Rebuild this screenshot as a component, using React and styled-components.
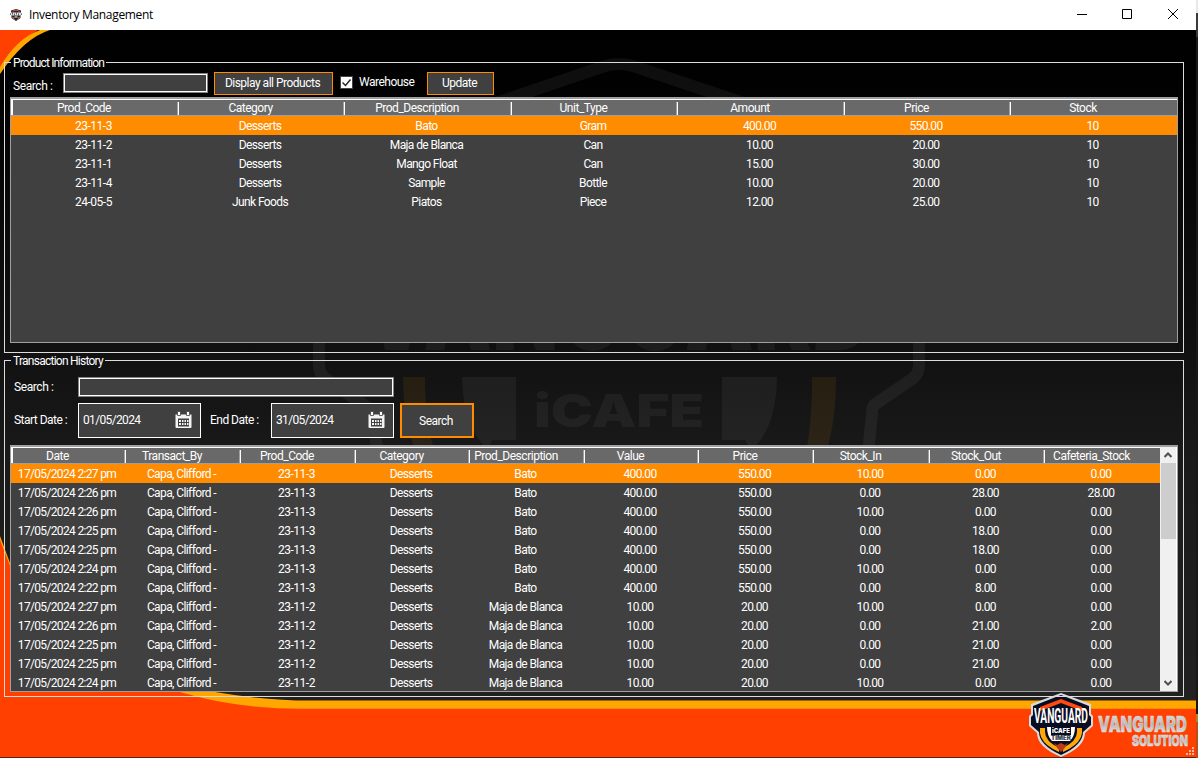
import React from "react";
import styled, { createGlobalStyle, css } from "styled-components";

const Global = createGlobalStyle`
  * { box-sizing: border-box; }
  body { margin: 0; background: #1b1b19; overflow: hidden; }
`;

const Desktop = styled.div`
  width: 1198px;
  height: 758px;
  padding-right: 2px;
  background: linear-gradient(#e8e8e8 0 13px, #3a3a3a 13px 37px, #181816 37px 714px, #a78a2a 714px 722px, #b3501c 722px);
  font-family: Roboto, "Liberation Sans", sans-serif;
  font-size: 12px;
  font-stretch: 90%;
  color: #fff;
`;

const Window = styled.div`
  width: 1196px;
  height: 758px;
  display: flex;
  flex-direction: column;
`;

const TitleBar = styled.header`
  height: 30px;
  flex: none;
  display: flex;
  align-items: center;
  padding-left: 10px;
  background: #fff;
  color: #000;
  font-family: "Open Sans", "Noto Sans", sans-serif;
  font-size: 12px;
  font-stretch: 100%;
  letter-spacing: -0.33px;
`;

const Title = styled.span`
  flex: 1;
  padding-left: 7px;
  line-height: 30px;
`;

const WindowButton = styled.span`
  width: ${(p) => p.$width || 46}px;
  height: 28px;
  align-self: flex-start;
  display: grid;
  place-items: center;
`;

const Client = styled.main`
  position: relative;
  flex: 1;
  padding: 25px 12px 0 4px;
  background: linear-gradient(#000 0, #020202 70px, #101010 310px, #1a1a1a 430px, #202120 670px);
  border-bottom: 1px solid #5c2410;
`;

const Backdrop = styled.svg`
  position: absolute;
  inset: 0;
  font-stretch: 100%;
`;

const Group = styled.section`
  position: relative;
  width: 1180px;
  height: ${(p) => p.$height}px;
`;

const Legend = styled.div`
  height: 16px;
  display: flex;
  align-items: center;
  line-height: 16px;
  letter-spacing: ${(p) => p.$spacing};
  white-space: nowrap;
  gap: 2px;
  &::before, &::after {
    content: "";
    height: 8px;
    align-self: flex-end;
    border-top: 1px solid #dcdcdc;
  }
  &::before { width: 6px; border-left: 1px solid #dcdcdc; }
  &::after { flex: 1; border-right: 1px solid #dcdcdc; }
`;

const GroupBody = styled.div`
  height: ${(p) => p.$height}px;
  padding: ${(p) => p.$top || 0}px 5px 0;
  border: 1px solid #dcdcdc;
  border-top: 0;
`;

const Toolbar = styled.div`
  display: flex;
  align-items: center;
  height: ${(p) => p.$height}px;
  margin-top: ${(p) => p.$top || 0}px;
`;

const Label = styled.label`
  width: ${(p) => p.$width}px;
  padding-left: ${(p) => p.$indent || 0}px;
  padding-top: ${(p) => p.$drop || 0}px;
  padding-bottom: ${(p) => p.$lift || 0}px;
  letter-spacing: ${(p) => p.$spacing || "-0.4px"};
  line-height: 16px;
  white-space: nowrap;
  flex: none;
`;

const TextBox = styled.div`
  width: ${(p) => p.$width}px;
  height: 20px;
  flex: none;
  background: #404040;
  border: 1px solid #828282;
  box-shadow: inset 0 0 0 1px #fff;
`;

const Button = styled.button`
  width: ${(p) => p.$width}px;
  height: ${(p) => p.$height}px;
  margin-left: ${(p) => p.$gap}px;
  padding: 0 2px 0 0;
  flex: none;
  background: #404040;
  border: ${(p) => p.$border || 1}px solid #ff8c00;
  color: #fff;
  font: inherit;
  letter-spacing: -0.5px;
`;

const Check = styled.span`
  width: 13px;
  height: 13px;
  margin: 0 6px 2px 7px;
  background: #fff;
  border: 1px solid #444;
  display: grid;
  place-items: center;
`;

const DateBox = styled.div`
  width: 123px;
  height: 35px;
  flex: none;
  display: flex;
  align-items: center;
  justify-content: space-between;
  padding: 0 8px 2px 4px;
  background: #404040;
  border: 1px solid #fff;
  letter-spacing: -0.65px;
  line-height: 16px;
`;

const Grid = styled.div`
  width: 1168px;
  height: ${(p) => p.$height}px;
  margin-top: ${(p) => p.$top}px;
  border: 1px solid #a0a0a0;
  border-top-width: 2px;
  background: #404040;
  display: flex;
`;

const Table = styled.div`
  flex: 1;
  min-width: 0;
`;

const columns = css`
  display: grid;
  grid-template-columns: ${(p) => p.$cols};
`;

const HeaderRow = styled.div`
  ${columns}
  height: 17px;
  background: #696969;
  border-bottom: 1px solid #a0a0a0;
  box-shadow: inset 0 1px #fff, inset 2px 0 #fff;
`;

const HeaderCell = styled.div`
  position: relative;
  text-align: center;
  padding-right: 21px;
  line-height: 18px;
  letter-spacing: -0.48px;
  white-space: nowrap;
  &:not(:last-child)::after {
    content: "";
    position: absolute;
    right: -1px;
    top: 3px;
    width: 2px;
    height: 13px;
    background: linear-gradient(90deg, #a0a0a0 50%, #fff 50%);
  }
`;

const Row = styled.div`
  ${columns}
  height: 19px;
  background: ${(p) => (p.$selected ? "#ff8c00" : "transparent")};
`;

const Cell = styled.div`
  padding-right: 2px;
  text-align: center;
  line-height: 21px;
  letter-spacing: ${(p) => p.$spacing};
  white-space: nowrap;
`;

const ScrollBar = styled.div`
  width: 17px;
  background: #f0f0f0;
  border-right: 1px solid #fff;
  display: flex;
  flex-direction: column;
  justify-content: space-between;
`;

const ScrollArrow = styled.span`
  height: 16px;
  display: grid;
  place-items: center;
`;

const ScrollThumb = styled.span`
  height: 76px;
  margin: 0 0 auto 1px;
  background: #cdcdcd;
`;

const cellSpacing = (v) =>
  v.includes("pm") ? "-0.66px" : v.startsWith("Capa") ? "-0.6px" : /^[\d.]+$/.test(v) ? "-0.65px" : /^[\d-]+$/.test(v) ? "-0.5px" : "-0.6px";

function DataTable({ cols, headers, rows }) {
  return (
    <Table>
      <HeaderRow $cols={cols}>
        {headers.map((h) => <HeaderCell key={h}>{h}</HeaderCell>)}
      </HeaderRow>
      {rows.map((r, i) => (
        <Row key={i} $cols={cols} $selected={i === 0}>
          {r.map((v, j) => <Cell key={j} $spacing={cellSpacing(v)}>{v}</Cell>)}
        </Row>
      ))}
    </Table>
  );
}

const products = [
  ["23-11-3", "Desserts", "Bato", "Gram", "400.00", "550.00", "10"],
  ["23-11-2", "Desserts", "Maja de Blanca", "Can", "10.00", "20.00", "10"],
  ["23-11-1", "Desserts", "Mango Float", "Can", "15.00", "30.00", "10"],
  ["23-11-4", "Desserts", "Sample", "Bottle", "10.00", "20.00", "10"],
  ["24-05-5", "Junk Foods", "Piatos", "Piece", "12.00", "25.00", "10"],
];

const bato = ["23-11-3", "Desserts", "Bato", "400.00", "550.00"];
const maja = ["23-11-2", "Desserts", "Maja de Blanca", "10.00", "20.00"];
const transactions = [
  ["2:27", bato, "10.00", "0.00", "0.00"],
  ["2:26", bato, "0.00", "28.00", "28.00"],
  ["2:26", bato, "10.00", "0.00", "0.00"],
  ["2:25", bato, "0.00", "18.00", "0.00"],
  ["2:25", bato, "0.00", "18.00", "0.00"],
  ["2:24", bato, "10.00", "0.00", "0.00"],
  ["2:22", bato, "0.00", "8.00", "0.00"],
  ["2:27", maja, "10.00", "0.00", "0.00"],
  ["2:26", maja, "0.00", "21.00", "2.00"],
  ["2:25", maja, "0.00", "21.00", "0.00"],
  ["2:25", maja, "0.00", "21.00", "0.00"],
  ["2:24", maja, "10.00", "0.00", "0.00"],
].map(([t, item, ...stock]) => [`17/05/2024 ${t} pm`, "Capa, Clifford -", ...item, ...stock]);

const AppIcon = () => (
  <svg width="12" height="12" viewBox="0 0 12 12">
    <path d="M1 1.500 6 0l5 1.500V4l1 1-1.500 2v2L6 12 1.500 9V7L0 5l1-1z" fill="#25252c" />
    <path d="M2.500 2.300 6 1l3.500 1.300" stroke="#e8542a" fill="none" />
    <path d="M1 3.500h10v3H1z" fill="#e6e6ea" />
    <path d="M2.500 3.500v2M4.500 4.500v2M6.500 3.500v2M8.500 4.500v2" stroke="#333" strokeWidth=".8" />
    <path d="M3 8v1.500L4.500 10.500M9 8v1.500L7.500 10.500" stroke="#f0874f" fill="none" />
    <path d="M4.500 8h3" stroke="#fff" />
  </svg>
);

const Calendar = () => (
  <svg width="17" height="18" viewBox="0 0 17 18">
    <path d="M.5 3.500h16V16q0 1-1 1h-14q-1 0-1-1z" fill="#f4f4f4" />
    <path d="M2.500.5h3v4h-3zM11.500.5h3v4h-3z" fill="#fff" stroke="#404040" strokeWidth=".8" />
    <path d="M3 7.500h11v8H3z" fill="#404040" />
    <path d="M4 9h2v2H4zM7 9h1.500v2H7zM9.500 9H11v2H9.500zM12 9h1.500v2H12zM4 12h2v2H4zM7 12h1.500v2H7zM9.500 12H11v2H9.500zM12 12h1.500v2H12z" fill="#f4f4f4" />
  </svg>
);

const Artwork = () => (
  <Backdrop width="1196" height="727" viewBox="0 30 1196 727">
    <defs>
      <linearGradient id="silver" x1="0" y1="0" x2="0" y2="1">
        <stop offset="0" stopColor="#e8e8e8" />
        <stop offset=".55" stopColor="#b8b8b8" />
        <stop offset="1" stopColor="#f2f2f2" />
      </linearGradient>
    </defs>
    <g fill="none" stroke="#fff" strokeOpacity=".055" strokeWidth="12">
      <path d="M440 122 605 66q14-4 28 0L800 122" />
      <path d="M319 320v45q0 9 7 14l38 26q8 4 8 13l8 45M919 320v45q0 9-7 14l-38 26q-2 2-2 9l-5 48" />
    </g>
    <g fill="#fff" fillOpacity=".05">
      <path d="M462 377h54v63h-24l-4 10q-25-22-26-73zM722 377h55q-1 53-26 73l-6-10h-23z" />
      <text x="534" y="427" fontFamily="Inter" fontWeight="900" fontSize="46" textLength="170" lengthAdjust="spacingAndGlyphs">iCAFE</text>
      <text x="362" y="350" fontFamily="Inter" fontWeight="900" fontSize="116" textLength="512" lengthAdjust="spacingAndGlyphs">VANGUARD</text>
    </g>
    <path d="M403 377h22q0 46 10 75h-19q-13-30-13-75zM812 377h24q0 46-10 75h-20q6-30 6-75z" fill="#ffa000" fillOpacity=".08" />
    <path d="M0 30h38Q18 42 0 73z" fill="#ff4000" />
    <path d="M0 67Q17 38 40 30h10Q24 38 0 74z" fill="#ffa700" />
    <path d="M0 536 10 563 120 660Q170 685 215 692 265 700.500 310 700.500H1196V757H0z" fill="#ffa700" />
    <path d="M0 540 10 566 110 665Q140 680 180 692 235 708.700 300 708.700H1196V757H0z" fill="#ff4000" />
    <g transform="translate(1029 693)">
      <path d="M32 0 62 11v10l2 2v10l-8 7q0 14-24 24Q8 54 8 40L0 33V23l2-2V11z" fill="#d8dade" />
      <path d="M32 2 60 13v9l2 2v8l-8 7q0 13-22 23Q10 52 10 39L2 32v-8l2-2v-9z" fill="#080d20" />
      <path d="M11 14 32 6l21 8v4L32 10l-21 8z" fill="#ff4b12" />
      <path d="M11 35v5q1 9 13 16l6 3v-4q-14-7-14-16v-4zM53 35v5q-1 9-13 16l-6 3v-4q14-7 14-16v-4z" fill="#ffa70a" />
      <path d="M18 34h4v8h20v-8h4q0 9-5 14H23q-5-5-5-14z" fill="#fff" />
      <text x="5" y="30" fill="#fff" fontFamily="Roboto" fontWeight="bold" fontSize="20" textLength="54" lengthAdjust="spacingAndGlyphs">VANGUARD</text>
      <text x="23" y="40" fill="#fff" fontFamily="Inter" fontWeight="900" fontSize="6" textLength="18" lengthAdjust="spacingAndGlyphs">iCAFE</text>
      <text x="22" y="47" fill="#333b4d" fontFamily="Inter" fontWeight="900" fontSize="5.500" textLength="20" lengthAdjust="spacingAndGlyphs">TIMER</text>
      <path d="m25 50 3 2 4-2 4 2 3-2-4 6-3 3-3-3z" fill="#b93b1c" />
    </g>
    <g fill="url(#silver)" stroke="#ddd" strokeWidth=".5" fontFamily="Inter" fontWeight="900">
      <text x="1098" y="731.500" fontSize="22" textLength="89" lengthAdjust="spacingAndGlyphs">VANGUARD</text>
      <text x="1132" y="745.500" fontSize="14" textLength="56" lengthAdjust="spacingAndGlyphs">SOLUTION</text>
    </g>
    <path d="M1192 747h2v2h-2zM1189 750h2v2h-2zM1192 750h2v2h-2zM1186 753h2v2h-2zM1189 753h2v2h-2zM1192 753h2v2h-2z" fill="#ffb59b" />
  </Backdrop>
);

export default function App() {
  return (
    <Desktop>
      <Global />
      <Window>
        <TitleBar>
          <AppIcon />
          <Title>Inventory Management</Title>
          <WindowButton $width={44}><svg width="10" height="10"><path d="M0 5.500h10" stroke="#000" /></svg></WindowButton>
          <WindowButton><svg width="10" height="10"><path d="M.5.5h9v9h-9z" stroke="#000" fill="none" /></svg></WindowButton>
          <WindowButton><svg width="10" height="10"><path d="m0 0 10 10M10 0 0 10" stroke="#000" /></svg></WindowButton>
        </TitleBar>
        <Client>
          <Artwork />
          <Group $height={298}>
            <Legend $spacing="-0.85px">Product Information</Legend>
            <GroupBody $height={282}>
              <Toolbar $height={24}>
                <Label $width={53} $indent={3} $drop={6}>Search :</Label>
                <TextBox $width={145} />
                <Button $width={119} $height={23} $gap={6}>Display all Products</Button>
                <Check><svg width="11" height="11"><path d="m1.500 5.500 3 3 5-6" stroke="#222" strokeWidth="1.400" fill="none" /></svg></Check>
                <Label $width={68} $lift={2} $spacing="-0.5px">Warehouse</Label>
                <Button $width={67} $height={23} $gap={0}>Update</Button>
              </Toolbar>
              <Grid $height={246} $top={2}>
                <DataTable
                  cols="167px 166px 167px 166px 167px 166px 167px"
                  headers={["Prod_Code", "Category", "Prod_Description", "Unit_Type", "Amount", "Price", "Stock"]}
                  rows={products}
                />
              </Grid>
            </GroupBody>
          </Group>
          <Group $height={344}>
            <Legend $spacing="-0.75px">Transaction History</Legend>
            <GroupBody $height={328} $top={8}>
              <Toolbar $height={20}>
                <Label $width={68} $indent={4}>Search :</Label>
                <TextBox $width={316} />
              </Toolbar>
              <Toolbar $height={35} $top={6}>
                <Label $width={68} $indent={4} $lift={1} $spacing="-0.52px">Start Date :</Label>
                <DateBox>01/05/2024<Calendar /></DateBox>
                <Label $width={70} $indent={9} $lift={1} $spacing="-0.52px">End Date :</Label>
                <DateBox>31/05/2024<Calendar /></DateBox>
                <Button $width={74} $height={35} $gap={6} $border={2}>Search</Button>
              </Toolbar>
              <Grid $height={247} $top={7}>
                <DataTable
                  cols="114px 115px 115px 114px 115px 114px 115px 116px 115px 116px"
                  headers={["Date", "Transact_By", "Prod_Code", "Category", "Prod_Description", "Value", "Price", "Stock_In", "Stock_Out", "Cafeteria_Stock"]}
                  rows={transactions}
                />
                <ScrollBar>
                  <ScrollArrow><svg width="8" height="8"><path d="m.5 6 3.500-3.500L7.500 6" stroke="#505050" strokeWidth="2" fill="none" /></svg></ScrollArrow>
                  <ScrollThumb />
                  <ScrollArrow><svg width="8" height="8"><path d="M.5 2 4 5.500 7.500 2" stroke="#505050" strokeWidth="2" fill="none" /></svg></ScrollArrow>
                </ScrollBar>
              </Grid>
            </GroupBody>
          </Group>
        </Client>
      </Window>
    </Desktop>
  );
}
